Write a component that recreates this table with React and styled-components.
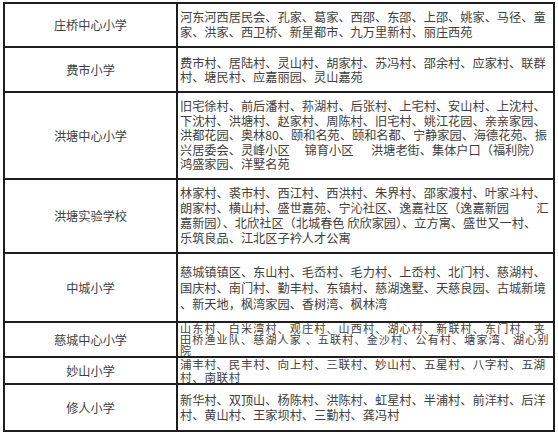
import React from "react";
import styled, { createGlobalStyle } from "styled-components";

const GlobalStyle = createGlobalStyle`
  html, body {
    margin: 0;
    padding: 0;
    background: #ffffff;
  }
  body {
    font-family: "Noto Sans CJK SC", "Noto Sans", sans-serif;
  }
`;

const Table = styled.div`
  display: flex;
  flex-direction: column;
  gap: 2px;
  padding: 2px;
  margin: 2px 0 0 3px;
  width: 552px;
  box-sizing: border-box;
  background: #1e1e1e;
`;

const Row = styled.div`
  display: grid;
  grid-template-columns: 171px 1fr;
  gap: 2px;
  height: ${(p) => p.$h}px;
`;

const NameCell = styled.div`
  display: flex;
  align-items: center;
  justify-content: center;
  background: #ffffff;
  font-size: 12.2px;
  color: #404040;
  overflow: hidden;
`;

const AreaCell = styled.div`
  display: flex;
  flex-direction: column;
  justify-content: center;
  background: #ffffff;
  padding-left: 2px;
  font-size: ${(p) => p.$fs || 12.2}px;
  letter-spacing: ${(p) => p.$ls || 0}px;
  line-height: ${(p) => p.$lh}px;
  color: #404040;
  overflow: hidden;
`;

const Line = styled.span`
  display: block;
  white-space: pre;
`;

const rows = [
  {
    name: "庄桥中心小学",
    h: 42,
    lh: 15,
    lines: [
      "河东河西居民会、孔家、葛家、西邵、东邵、上邵、姚家、马径、童",
      "家、洪家、西卫桥、新星都市、九万里新村、丽庄西苑",
    ],
  },
  {
    name: "费市小学",
    h: 43,
    lh: 14,
    lines: [
      "费市村、居陆村、灵山村、胡家村、苏冯村、邵余村、应家村、联群",
      "村、塘民村、应嘉丽园、灵山嘉苑",
    ],
  },
  {
    name: "洪塘中心小学",
    h: 85,
    lh: 14.5,
    lines: [
      "旧宅徐村、前后潘村、荪湖村、后张村、上宅村、安山村、上沈村、",
      "下沈村、洪塘村、赵家村、周陈村、旧宅村、姚江花园、亲亲家园、",
      "洪都花园、奥林80、颐和名苑、颐和名都、宁静家园、海德花苑、振",
      "兴居委会、灵峰小区　 锦育小区　  洪塘老街、集体户口（福利院）",
      "鸿盛家园、洋墅名苑",
    ],
  },
  {
    name: "洪塘实验学校",
    h: 72,
    lh: 15,
    lines: [
      "林家村、裘市村、西江村、西洪村、朱界村、邵家渡村、叶家斗村、",
      "朗家村、横山村、盛世嘉苑、宁沁社区、逸嘉社区（逸嘉新园　　 汇",
      "嘉新园）、北欣社区（北城春色 欣欣家园）、立方寓、盛世又一村、",
      "乐筑良品、江北区子衿人才公寓",
    ],
  },
  {
    name: "中城小学",
    h: 67,
    lh: 16,
    lines: [
      "慈城镇镇区、东山村、毛岙村、毛力村、上岙村、北门村、慈湖村、",
      "国庆村、南门村、勤丰村、东镇村、慈湖逸墅、天慈良园、古城新境",
      "、新天地，枫湾家园、香树湾、枫林湾",
    ],
  },
  {
    name: "慈城中心小学",
    h: 33,
    lh: 11,
    fs: 11,
    ls: 1.2,
    lines: [
      "山东村、白米湾村、观庄村、山西村、湖心村、新联村、东门村、夹",
      "田桥渔业队、慈湖人家 、五联村、金沙村、公有村、塘家湾、湖心别",
      "院",
    ],
  },
  {
    name: "妙山小学",
    h: 25,
    lh: 12.5,
    fs: 11.6,
    ls: 0.6,
    lines: [
      "浦丰村、民丰村、向上村、三联村、妙山村、五星村、八字村、五湖",
      "村、南联村",
    ],
  },
  {
    name: "修人小学",
    h: 45,
    lh: 15,
    lines: [
      "新华村、双顶山、杨陈村、洪陈村、虹星村、半浦村、前洋村、后洋",
      "村、黄山村、王家坝村、三勤村、龚冯村",
    ],
  },
];

export default function App() {
  return (
    <>
      <GlobalStyle />
      <Table>
        {rows.map((r) => (
          <Row key={r.name} $h={r.h}>
            <NameCell>{r.name}</NameCell>
            <AreaCell $lh={r.lh} $fs={r.fs} $ls={r.ls}>
              {r.lines.map((l, i) => (
                <Line key={i}>{l}</Line>
              ))}
            </AreaCell>
          </Row>
        ))}
      </Table>
    </>
  );
}
